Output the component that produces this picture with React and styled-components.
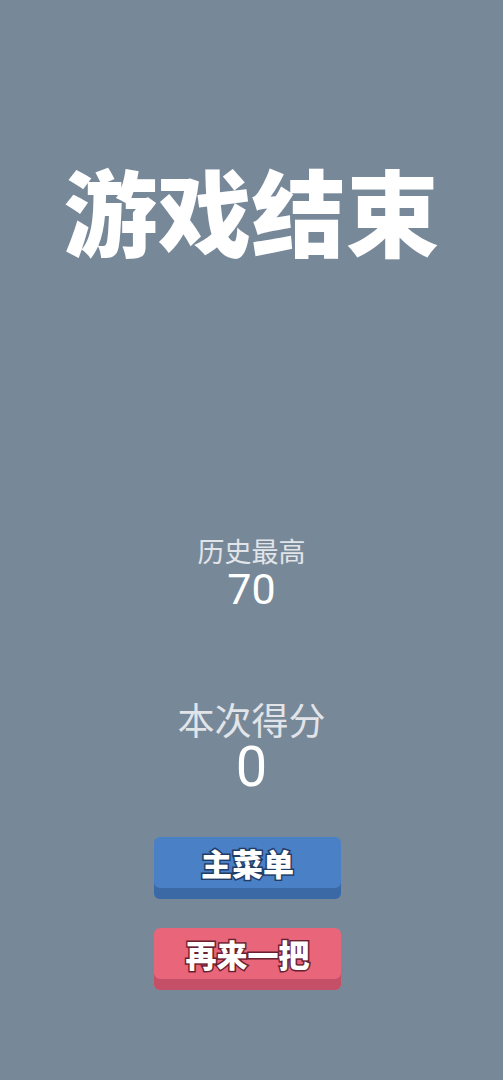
import React from "react";
import styled, { createGlobalStyle } from "styled-components";

const Global = createGlobalStyle`
  html, body { margin: 0; padding: 0; background: #778899; }
  body { font-family: "Noto Sans CJK SC", "Noto Sans", sans-serif; }
`;

const Screen = styled.div`
  width: 503px;
  height: 1080px;
  background: #778899;
  display: flex;
  flex-direction: column;
  align-items: center;
  box-sizing: border-box;
  padding-top: 152px;
`;

const Title = styled.h1`
  margin: 0;
  font-family: "Noto Sans CJK SC", sans-serif;
  font-weight: 900;
  font-size: 94px;
  line-height: 114px;
  color: #ffffff;
`;

const ScoreBlock = styled.div`
  display: flex;
  flex-direction: column;
  align-items: center;
  margin-top: ${(p) => p.$gap}px;
`;

const Label = styled.div`
  font-size: ${(p) => p.$size}px;
  line-height: ${(p) => p.$lh}px;
  color: #e1e4e8;
  font-weight: 400;
`;

const Value = styled.div`
  font-family: "Roboto", "Noto Sans", sans-serif;
  font-size: ${(p) => p.$size}px;
  line-height: ${(p) => p.$lh}px;
  color: #ffffff;
  font-weight: 400;
`;

const Button = styled.button`
  width: 187px;
  height: 62px;
  margin: ${(p) => p.$gap}px 8px 0 0;
  border: none;
  border-radius: 6px;
  background: ${(p) => p.$face};
  box-shadow: inset 0 -11px 0 ${(p) => p.$edge};
  padding: 0 0 11px 0;
  display: flex;
  align-items: center;
  justify-content: center;
  font-family: "Noto Sans CJK SC", sans-serif;
  font-weight: 900;
  font-size: 31px;
  line-height: 40px;
  color: #ffffff;
  -webkit-text-stroke: 3px ${(p) => p.$ink};
  paint-order: stroke fill;
  cursor: pointer;
`;

export default function App() {
  return (
    <>
      <Global />
      <Screen>
        <Title>游戏结束</Title>
        <ScoreBlock $gap={268}>
          <Label $size={27} $lh={34}>历史最高</Label>
          <Value $size={43} $lh={42}>70</Value>
        </ScoreBlock>
        <ScoreBlock $gap={87}>
          <Label $size={37} $lh={44}>本次得分</Label>
          <Value $size={56} $lh={52}>0</Value>
        </ScoreBlock>
        <Button $gap={44} $face="#4a80c6" $edge="#3b69a6" $ink="#213d66">
          主菜单
        </Button>
        <Button $gap={29} $face="#e8657a" $edge="#c54f66" $ink="#6a2030">
          再来一把
        </Button>
      </Screen>
    </>
  );
}
